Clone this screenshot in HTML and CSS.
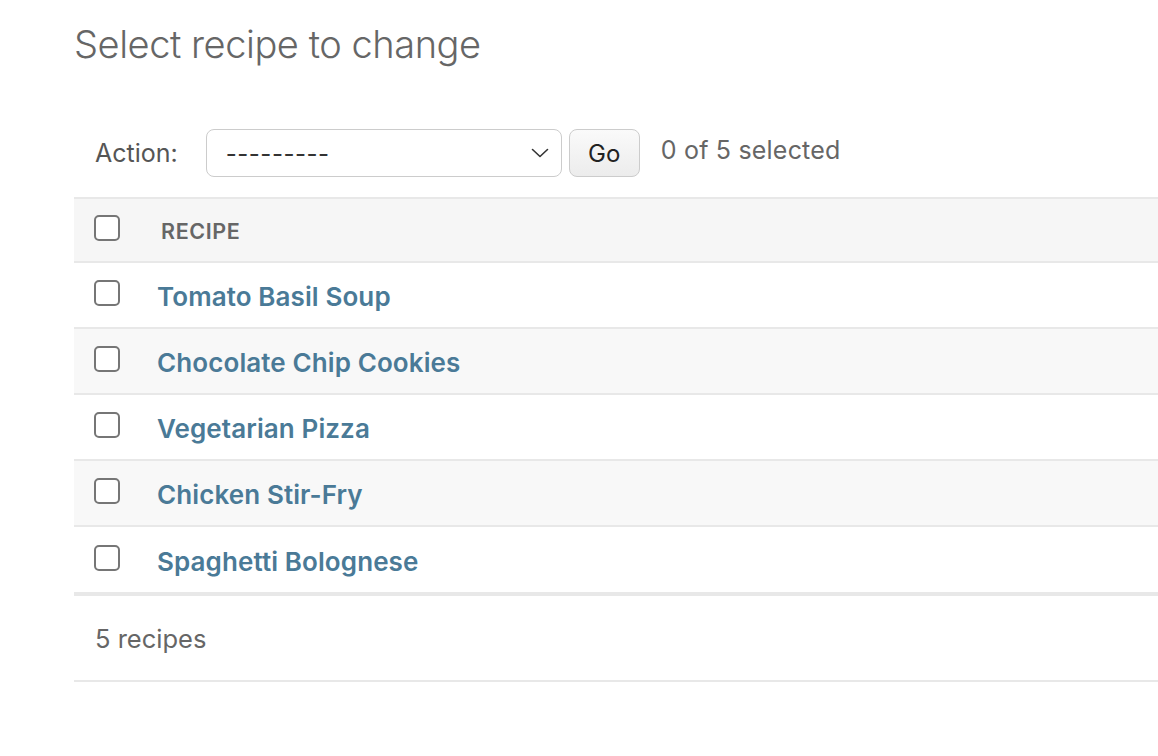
FILE: index.html
```html
<!DOCTYPE html>
<html lang="en">
<head>
<meta charset="utf-8">
<title>Select recipe to change</title>
<link rel="stylesheet" href="styles.css">
</head>
<body>
<div class="content">
  <h1 class="title">Select recipe to change</h1>
  <div class="changelist">
    <div class="actions">
      <span class="action-label">Action:</span>
      <div class="select-box">
        <span class="select-value">---------</span>
        <svg class="chevron" width="18" height="10" viewBox="0 0 18 10"><path d="M1.5 1.5 L9 8.5 L16.5 1.5" fill="none" stroke="#333" stroke-width="1.6" stroke-linecap="round" stroke-linejoin="round"/></svg>
      </div>
      <button class="go-btn" type="button">Go</button>
      <span class="counter">0 of 5 selected</span>
    </div>
    <table class="result-list">
      <thead>
        <tr>
          <th class="check-col"><span class="checkbox"></span></th>
          <th class="name-col">Recipe</th>
        </tr>
      </thead>
      <tbody>
        <tr><td class="check-col"><span class="checkbox"></span></td><td class="name-cell"><a href="#">Tomato Basil Soup</a></td></tr>
        <tr class="alt"><td class="check-col"><span class="checkbox"></span></td><td class="name-cell"><a href="#">Chocolate Chip Cookies</a></td></tr>
        <tr><td class="check-col"><span class="checkbox"></span></td><td class="name-cell"><a href="#">Vegetarian Pizza</a></td></tr>
        <tr class="alt"><td class="check-col"><span class="checkbox"></span></td><td class="name-cell"><a href="#">Chicken Stir-Fry</a></td></tr>
        <tr class="last"><td class="check-col"><span class="checkbox"></span></td><td class="name-cell"><a href="#">Spaghetti Bolognese</a></td></tr>
      </tbody>
    </table>
    <p class="paginator">5 recipes</p>
  </div>
</div>
</body>
</html>
```
FILE: styles.css
```css
* { box-sizing: border-box; }
html, body {
  margin: 0;
  padding: 0;
  background: #fff;
  font-family: Inter, "Noto Sans", "Liberation Sans", sans-serif;
  color: #333;
}
.content {
  padding: 18px 0 0 74px;
}
.title {
  margin: 0;
  font-size: 38px;
  line-height: 52px;
  font-weight: 300;
  color: #666;
  letter-spacing: -0.45px;
}
.changelist {
  margin-top: 59px;
}
.actions {
  display: flex;
  align-items: center;
  height: 70px;
  padding: 0 0 20px 21px;
  border-bottom: 2px solid #e8e8e8;
}
.action-label {
  font-size: 25px;
  color: #555;
  margin-right: 28px;
}
.select-box {
  width: 356px;
  height: 48px;
  border: 1.5px solid #ccc;
  border-radius: 8px;
  display: flex;
  align-items: center;
  justify-content: space-between;
  padding: 0 12px 0 19px;
  background: #fff;
}
.select-value {
  font-size: 24px;
  color: #333;
  letter-spacing: 0.5px;
}
.go-btn {
  margin-left: 7px;
  width: 71px;
  height: 48px;
  border: 1.5px solid #ccc;
  border-radius: 8px;
  background: linear-gradient(#fafafa, #ececec);
  font-family: inherit;
  font-size: 24px;
  color: #222;
  padding: 0;
}
.counter {
  margin-left: 21px;
  font-size: 25px;
  color: #666;
  margin-top: -6px;
  letter-spacing: 0.2px;
}
.result-list {
  width: 100%;
  border-collapse: collapse;
}
.result-list th {
  background: #f6f6f6;
  height: 63px;
  border-bottom: 2px solid #e8e8e8;
  text-align: left;
  font-size: 21.5px;
  font-weight: 600;
  color: #666;
  text-transform: uppercase;
  letter-spacing: 0.6px;
  padding: 0;
}
.result-list td {
  height: 66px;
  border-bottom: 2px solid #e8e8e8;
  padding: 0;
  vertical-align: middle;
}
.result-list td.name-cell {
  padding-top: 3px;
}
.result-list tr.alt td {
  background: #f8f8f8;
}
.result-list tr.last td {
  border-bottom: 4px solid #e8e8e8;
  height: 68px;
}
.check-col {
  width: 83px;
  padding-left: 20px !important;
}
.result-list th.name-col {
  padding-left: 4px;
  padding-top: 2px;
}
.checkbox {
  display: block;
  width: 26px;
  height: 26px;
  border: 2px solid #767676;
  border-radius: 5px;
  background: #fff;
  margin-top: -4px;
}
.result-list a {
  font-size: 26px;
  font-weight: 600;
  color: #4a7a97;
  text-decoration: none;
  letter-spacing: 0.1px;
}
.paginator {
  margin: 0;
  height: 86px;
  display: flex;
  align-items: center;
  padding-left: 21px;
  font-size: 25.5px;
  color: #666;
  border-bottom: 2px solid #e8e8e8;
}
```
